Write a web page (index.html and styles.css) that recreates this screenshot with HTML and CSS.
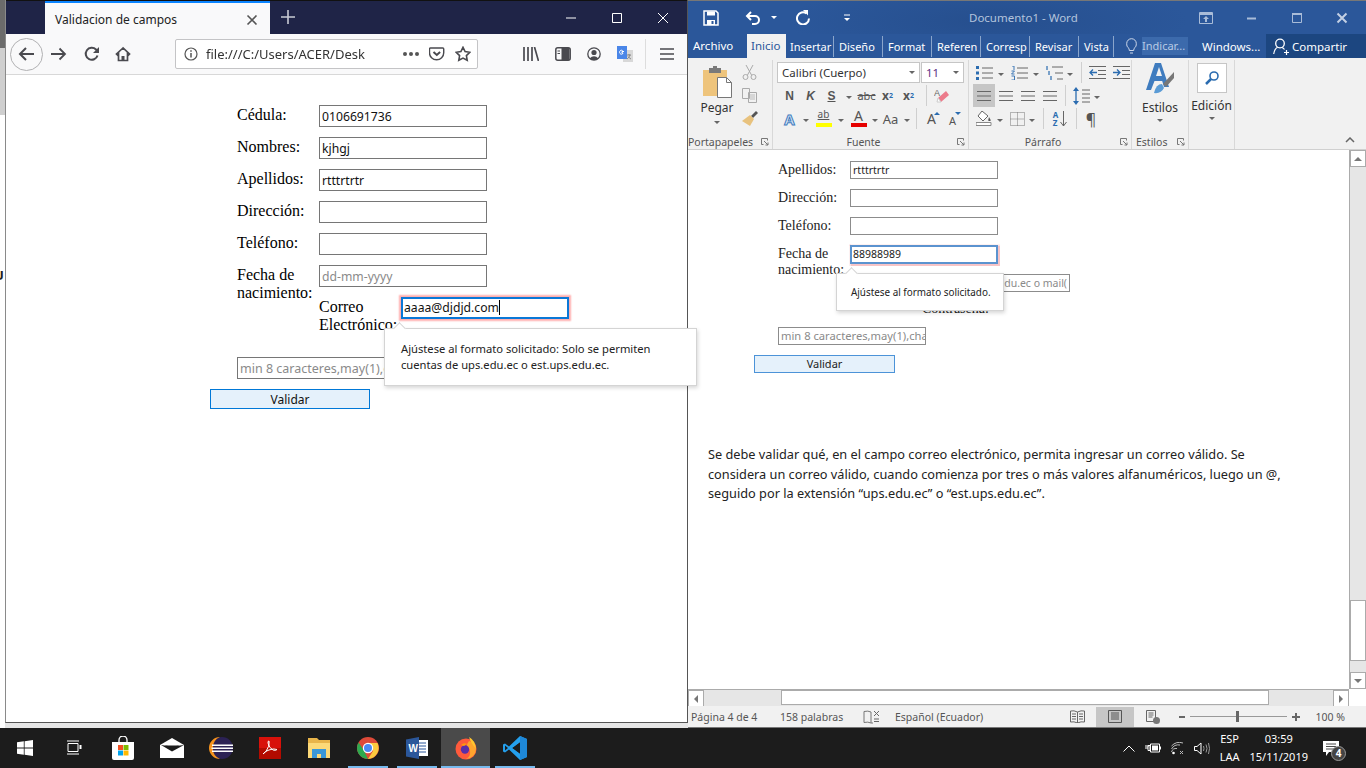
FILE: index.html
```html
<!DOCTYPE html>
<html lang="es">
<head>
  <meta charset="UTF-8" />
  <title>Validacion de campos</title>
  <link rel="stylesheet" href="styles.css">
</head>
<body>
  <svg class="sprite" width="0" height="0">
    <symbol id="lines3" viewBox="0 0 16 12"><path d="M1 1.5h14M1 6h14M1 10.5h14" stroke="#666" fill="none"/></symbol>
    <symbol id="dialog" viewBox="0 0 8 8"><path d="M.5.5h6v2M.5.5v6h2M3 3l4 4M7 4.5V7H4.5" stroke="#777" fill="none"/></symbol>
  </svg>

  <div class="desktop">
    <div class="behind"><span class="behind-letter">U</span></div>

    <!-- navegador -->
    <section class="browser">
      <div class="fx-title">
        <div class="fx-tab">
          <span class="fx-tab-name">Validacion de campos</span>
          <svg width="12" height="12" viewBox="0 0 12 12"><path d="M1.5 1.5l9 9M10.5 1.5l-9 9" stroke="#555" stroke-width="1.6"/></svg>
        </div>
        <svg class="fx-new" width="14" height="14" viewBox="0 0 14 14"><path d="M7 0v14M0 7h14" stroke="#c8cad4" stroke-width="1.6"/></svg>
        <div class="win-btns">
          <svg width="12" height="12" viewBox="0 0 12 12"><path d="M1 6h10" stroke="#fff"/></svg>
          <svg width="12" height="12" viewBox="0 0 12 12"><path d="M1.5 1.5h9v9h-9z" stroke="#fff" fill="none"/></svg>
          <svg width="12" height="12" viewBox="0 0 12 12"><path d="M1 1l10 10M11 1L1 11" stroke="#fff"/></svg>
        </div>
      </div>
      <div class="fx-bar">
        <div class="fx-back">
          <svg width="18" height="18" viewBox="0 0 18 18"><path d="M16 9H2M8 3L2 9l6 6" stroke="#4a4a4f" stroke-width="2" fill="none"/></svg>
        </div>
        <svg class="fx-fwd" width="16" height="16" viewBox="0 0 16 16"><path d="M0 8h14M8.500 2.500L14 8l-5.500 5.500" stroke="#4a4a4f" stroke-width="1.800" fill="none"/></svg>
        <svg class="fx-reload" width="16" height="16" viewBox="0 0 16 16"><path d="M13.500 9.500A6 6 0 1 1 12 3.500L14 5.500" stroke="#4a4a4f" stroke-width="2" fill="none"/><path d="M15 1v6H9z" fill="#4a4a4f"/></svg>
        <svg class="fx-home" width="16" height="16" viewBox="0 0 16 16"><path d="M8 2L1.500 8 2.500 9 3.500 8v6.500h9V8l1 1 1-1z" fill="none" stroke="#4a4a4f" stroke-width="1.700"/><path d="M6.500 10h3v4.500h-3z" fill="#4a4a4f"/></svg>
        <div class="fx-url">
          <svg width="14" height="14" viewBox="0 0 14 14"><circle cx="7" cy="7" r="6" stroke="#555" fill="none" stroke-width="1.200"/><path d="M7 6v4.500M7 3.300v1.500" stroke="#555" stroke-width="1.500"/></svg>
          <span class="fx-url-text">file:///C:/Users/ACER/Desk</span>
          <span class="fx-dots"><i></i><i></i><i></i></span>
          <svg width="16" height="15" viewBox="0 0 16 15"><path d="M1.500 1h13q1 0 1 1v4a7.500 7.500 0 0 1-15 0V2q0-1 1-1z" stroke="#4a4a4f" stroke-width="1.500" fill="none" transform="scale(.95)"/><path d="M4.500 5l3.300 3 3.300-3" stroke="#4a4a4f" stroke-width="2" fill="none"/></svg>
          <svg width="16" height="16" viewBox="0 0 16 16"><path d="M8 1.300l2.100 4.300 4.700.7-3.400 3.300.8 4.700L8 12.100l-4.200 2.200.8-4.700L1.200 6.300l4.700-.7z" stroke="#4a4a4f" stroke-width="1.600" fill="none"/></svg>
        </div>
        <div class="fx-tools">
          <svg width="16" height="14" viewBox="0 0 16 14"><path d="M1 0v14M5 0v14M9 0v14M11.500 0l4 14" stroke="#4a4a4f" stroke-width="1.700"/></svg>
          <svg width="16" height="14" viewBox="0 0 16 14"><rect x=".8" y=".8" width="14.400" height="12.400" rx="2" stroke="#4a4a4f" stroke-width="1.500" fill="none"/><path d="M6.500 1v12h8V1z" fill="#4a4a4f"/><path d="M2.500 4h2.500M2.500 6.500h2.500" stroke="#4a4a4f"/></svg>
          <svg width="14" height="14" viewBox="0 0 14 14"><circle cx="7" cy="7" r="6.200" stroke="#4a4a4f" stroke-width="1.300" fill="none"/><circle cx="7" cy="5.500" r="2.600" fill="#4a4a4f"/><path d="M2.500 11.500q4.500-4.500 9 0l-2 1.500h-5z" fill="#4a4a4f"/></svg>
          <svg width="16" height="16" viewBox="0 0 16 16"><path d="M6 4h10v12H6z" fill="#d8d8d8"/><path d="M0 0h10v13H0z" fill="#4a86e8"/><path d="M7 5.500H5v1.500h1q-.3 1.200-1.300 1.200a2 2 0 1 1 .9-3.700" stroke="#fff" fill="none"/><path d="M10 9h4M12 8v1M13 9q-1 3-3 4M11 10.500q1 1.500 3 2.500" stroke="#777" fill="none" stroke-width=".8"/></svg>
          <span class="fx-sep"></span>
          <svg width="14" height="12" viewBox="0 0 14 12"><path d="M0 1h14M0 6h14M0 11h14" stroke="#4a4a4f" stroke-width="1.700"/></svg>
        </div>
      </div>
      <div class="fx-page">
        <form class="val-form">
          <div class="val-row"><label class="val-label">Cédula:</label><input class="val-input" value="0106691736"></div>
          <div class="val-row"><label class="val-label">Nombres:</label><input class="val-input" value="kjhgj"></div>
          <div class="val-row"><label class="val-label">Apellidos:</label><input class="val-input" value="rtttrtrtr"></div>
          <div class="val-row"><label class="val-label">Dirección:</label><input class="val-input"></div>
          <div class="val-row"><label class="val-label">Teléfono:</label><input class="val-input"></div>
          <div class="val-row val-row-date"><label class="val-label">Fecha de nacimiento:</label><input class="val-input" placeholder="dd-mm-yyyy"></div>
          <div class="val-row val-row-mail">
            <label class="val-label val-label-mail">Correo Electrónico:</label>
            <div class="val-mailbox">
              <div class="val-input val-input-bad">aaaa@djdjd.com<span class="caret-bar"></span></div>
              <div class="val-tip val-tip-big">
                <span class="val-tip-arrow"></span>
                Ajústese al formato solicitado: Solo se permiten cuentas de ups.edu.ec o est.ups.edu.ec.
              </div>
            </div>
          </div>
          <input class="val-input val-pass" placeholder="min 8 caracteres,may(1),cha">
          <button type="button" class="val-btn">Validar</button>
        </form>
      </div>
    </section>

    <!-- word -->
    <section class="word">
      <div class="wd-title">
        <svg class="wd-save" width="16" height="16" viewBox="0 0 16 16"><path d="M1 1h12l2 2v12H1z" stroke="#fff" stroke-width="1.500" fill="none"/><path d="M4 1.500h8v4H4zM4 10h8v5H4z" fill="#fff"/><path d="M8.500 11h2v3h-2z" fill="#2b579a"/></svg>
        <svg class="wd-undo" width="16" height="14" viewBox="0 0 16 14"><path d="M2 5h8a4 4 0 0 1 0 8H7M6 1L2 5l4 4" stroke="#fff" stroke-width="2" fill="none"/></svg>
        <span class="arrow-down arrow-white wd-undo-arrow"></span>
        <svg class="wd-redo" width="14" height="15" viewBox="0 0 14 15"><path d="M10.500 3.500a6 6 0 1 0 2.500 5" stroke="#fff" stroke-width="2" fill="none"/><path d="M7 0h5v5.500z" fill="#fff"/></svg>
        <svg class="wd-custom" width="8" height="8" viewBox="0 0 8 8"><path d="M1 1h6" stroke="#fff"/><path d="M1 4h6L4 7z" fill="#fff"/></svg>
        <span class="wd-name">Documento1 - Word</span>
        <div class="wd-win">
          <svg width="14" height="12" viewBox="0 0 14 12"><path d="M.5 .5h13v11H.5z" stroke="#a9bcd8" fill="none"/><path d="M1 1h12v2H1zM7 4l3 3H8v3H6V7H4z" fill="#a9bcd8"/></svg>
          <svg width="12" height="12" viewBox="0 0 12 12"><path d="M1 6.500h9" stroke="#a9bcd8" stroke-width="2"/></svg>
          <svg width="12" height="12" viewBox="0 0 12 12"><path d="M1.500 1.500h9v9h-9z" stroke="#a9bcd8" fill="none"/><path d="M1 1h10v2H1z" fill="#a9bcd8"/></svg>
          <svg width="12" height="12" viewBox="0 0 12 12"><path d="M1.500 1.500l9 9M10.500 1.500l-9 9" stroke="#c3d0e4" stroke-width="2"/></svg>
        </div>
      </div>
      <nav class="wd-tabs">
        <span class="wd-tab wd-archivo">Archivo</span>
        <span class="wd-tab wd-active">Inicio</span>
        <span class="wd-tab wd-sep">Insertar</span>
        <span class="wd-tab wd-sep">Diseño</span>
        <span class="wd-tab wd-sep">Format</span>
        <span class="wd-tab wd-sep">Referen</span>
        <span class="wd-tab wd-sep">Corresp</span>
        <span class="wd-tab wd-sep">Revisar</span>
        <span class="wd-tab wd-sep wd-vista">Vista</span>
        <svg class="wd-bulb" width="11" height="16" viewBox="0 0 11 16"><path d="M3 10.500C1 9 .7 7.500.7 5.500a4.800 4.800 0 0 1 9.600 0c0 2-.3 3.500-2.300 5l-.3 2H3.300zM4 15h3" stroke="#cfd9ea" fill="none"/></svg>
        <span class="wd-tell">Indicar...</span>
        <span class="wd-windows">Windows...</span>
        <span class="wd-share">
          <svg width="16" height="17" viewBox="0 0 16 17"><circle cx="7" cy="5.500" r="4.300" stroke="#fff" stroke-width="1.300" fill="none"/><path d="M.7 16q.8-5.500 4-6.800M9 9.500q1.500.5 2.500 2M11 14.500h5M13.500 12v5" stroke="#fff" stroke-width="1.200" fill="none"/></svg>
          Compartir
        </span>
      </nav>
      <div class="ribbon">
        <div class="rb-group rb-clip">
          <div class="rb-body rb-clip-body">
            <div class="rb-paste">
              <svg width="29" height="32" viewBox="0 0 29 32"><path d="M0 4h24v26H0z" fill="#eec47c"/><path d="M6 2h12v5H6z" fill="#7a7a7a"/><path d="M10 0h4v3h-4z" fill="#7a7a7a"/><path d="M14.500 11.500h9l5 5v15h-14z" fill="#fff" stroke="#777"/><path d="M23.500 11.500v5h5" fill="none" stroke="#777"/></svg>
              <span class="rb-big-label">Pegar</span>
              <span class="arrow-down"></span>
            </div>
            <div class="rb-clip-tools">
              <svg width="15" height="15" viewBox="0 0 15 15"><path d="M4 0l5.500 10M11 0L5.500 10" stroke="#aaa" fill="none"/><circle cx="3.500" cy="12" r="2.500" stroke="#aaa" fill="none"/><circle cx="11.500" cy="12" r="2.500" stroke="#aaa" fill="none"/></svg>
              <svg width="15" height="15" viewBox="0 0 15 15"><path d="M.5.500h7v10h-7zM6.500 4.500h8v10h-8z" stroke="#aaa" fill="#f1f1f1"/><path d="M8 7h5M8 9h5M8 11h5" stroke="#bbb"/></svg>
              <svg width="16" height="15" viewBox="0 0 16 15"><path d="M9 5l5-5 2 2-5 5z" fill="#555"/><path d="M8 4l4 4-4 7-8-5z" fill="#e8c27e"/></svg>
            </div>
          </div>
          <div class="rb-caption">Portapapeles<svg class="rb-launch" width="8" height="8"><use href="#dialog"/></svg></div>
        </div>

        <div class="rb-group rb-font">
          <div class="rb-body rb-stack">
            <div class="rb-selects">
              <div class="rb-select rb-select-font"><span>Calibri (Cuerpo)</span><span class="arrow-down"></span></div>
              <div class="rb-select rb-select-size"><span>11</span><span class="arrow-down"></span></div>
            </div>
            <div class="rb-row rb-row-font">
              <span class="tool tool-b">N</span>
              <span class="tool tool-i">K</span>
              <span class="tool tool-u">S</span>
              <span class="tool-caret"><span class="arrow-down"></span></span>
              <span class="tool tool-strike">abc</span>
              <span class="tool tool-sub">x<sub>2</sub></span>
              <span class="tool tool-sub">x<sup>2</sup></span>
              <span class="rb-vsep rb-vsep-eraser"></span>
              <svg class="tool-svg" width="16" height="16" viewBox="0 0 16 16"><path d="M7 14l8-7-3-4-8 7z" fill="#ec7b8b"/><path d="M4 10l3 4H3z" fill="#fff" stroke="#ccc"/><text x="0" y="8" font-size="9" fill="#666" font-family="Liberation Sans">A</text></svg>
            </div>
            <div class="rb-row rb-row-font">
              <span class="tool tool-a-fx">A</span>
              <span class="tool-caret tool-caret-s"><span class="arrow-down"></span></span>
              <span class="tool-gap"></span>
              <span class="tool tool-color"><span class="tool-ab">ab</span><span class="bar bar-yellow"></span></span>
              <span class="tool-caret"><span class="arrow-down"></span></span>
              <span class="tool tool-color"><span class="tool-a">A</span><span class="bar bar-red"></span></span>
              <span class="tool-caret tool-caret-s"><span class="arrow-down"></span></span>
              <span class="tool tool-aa">Aa</span>
              <span class="tool-caret tool-caret-s"><span class="arrow-down"></span></span>
              <span class="rb-vsep rb-vsep-tight"></span>
              <span class="tool tool-grow">A<i class="mini-up"></i></span>
              <span class="tool tool-shrink">A<i class="mini-down"></i></span>
            </div>
          </div>
          <div class="rb-caption rb-caption-off">Fuente<svg class="rb-launch" width="8" height="8"><use href="#dialog"/></svg></div>
        </div>

        <div class="rb-group rb-para">
          <div class="rb-body rb-stack rb-para-body">
            <div class="rb-row rb-row-para">
              <svg class="ptool" width="18" height="14" viewBox="0 0 18 14"><path d="M6 2h11M6 7h11M6 12h11" stroke="#666"/><path d="M0 0h3v3H0zM0 5.500h3v3H0zM0 11h3v3H0z" fill="#2b6cb0"/></svg>
              <span class="tool-caret"><span class="arrow-down"></span></span>
              <svg class="ptool" width="18" height="14" viewBox="0 0 18 14"><path d="M6 2h11M6 7h11M6 12h11" stroke="#666"/><path d="M1 0h2v4M.500 5h3l-3 3h3M.500 10h3v4h-3" stroke="#2b6cb0" fill="none" stroke-width=".9"/></svg>
              <span class="tool-caret"><span class="arrow-down"></span></span>
              <svg class="ptool" width="17" height="14" viewBox="0 0 17 14"><path d="M6 1h11M9 7h8M11 13h6" stroke="#666"/><path d="M1 0v4M3 5v4M5 10v4" stroke="#2b6cb0" stroke-width="1.200"/></svg>
              <span class="tool-caret"><span class="arrow-down"></span></span>
              <span class="rb-vsep rb-vsep-tight"></span>
              <svg class="ptool" width="17" height="13" viewBox="0 0 17 13"><path d="M0 .5h17M9 4.500h8M9 8.500h8M0 12.500h17" stroke="#666"/><path d="M8 6.500H1M4 3.500l-3 3 3 3" stroke="#2b6cb0" stroke-width="1.300" fill="none"/></svg>
              <svg class="ptool ptool-indent" width="17" height="13" viewBox="0 0 17 13"><path d="M0 .5h17M9 4.500h8M9 8.500h8M0 12.500h17" stroke="#666"/><path d="M0 6.500h7M4 3.500l3 3-3 3" stroke="#2b6cb0" stroke-width="1.300" fill="none"/></svg>
            </div>
            <div class="rb-row rb-row-para">
              <span class="align-tool align-active"><svg width="16" height="12"><use href="#lines3"/></svg></span>
              <span class="align-tool"><svg width="16" height="12"><use href="#lines3"/></svg></span>
              <span class="align-tool"><svg width="16" height="12"><use href="#lines3"/></svg></span>
              <span class="align-tool"><svg width="16" height="12"><use href="#lines3"/></svg></span>
              <span class="rb-vsep rb-vsep-tight"></span>
              <svg class="ptool" width="17" height="18" viewBox="0 0 17 18"><path d="M3 2v14" stroke="#2b6cb0" stroke-width="1.300"/><path d="M0 4l3-4 3 4zM0 14l3 4 3-4z" fill="#2b6cb0"/><path d="M9 3h8M9 7h8M9 11h8M9 15h8" stroke="#666"/></svg>
              <span class="tool-caret"><span class="arrow-down"></span></span>
            </div>
            <div class="rb-row rb-row-para">
              <svg class="ptool" width="17" height="15" viewBox="0 0 17 15"><path d="M6 0l6 5-5 5-5-5z" fill="#fff" stroke="#666"/><path d="M13 6q2 3 1.500 4h-2q-.5-1 .5-4z" fill="#555"/><path d="M0 11.500h15v3H0z" fill="#fff" stroke="#888"/></svg>
              <span class="tool-caret"><span class="arrow-down"></span></span>
              <svg class="ptool" width="15" height="14" viewBox="0 0 15 14"><path d="M.5.500h14v13H.5zM7.500.500v13M.5 7h14" stroke="#777" stroke-dasharray="1 1" fill="none"/></svg>
              <span class="tool-caret"><span class="arrow-down"></span></span>
              <span class="rb-vsep rb-vsep-tight"></span>
              <span class="tool tool-sort"><span class="sort-az">A<br>Z</span><svg width="7" height="16" viewBox="0 0 7 16"><path d="M3.500 0v15M.5 11l3 4 3-4" stroke="#666" fill="none"/></svg></span>
              <span class="rb-vsep rb-vsep-tight"></span>
              <span class="tool tool-pilcrow">¶</span>
            </div>
          </div>
          <div class="rb-caption rb-caption-off">Párrafo<svg class="rb-launch" width="8" height="8"><use href="#dialog"/></svg></div>
        </div>

        <div class="rb-group rb-styles">
          <div class="rb-body rb-col">
            <svg width="28" height="34" viewBox="0 0 28 34"><path d="M9 0h6l8 24h-5l-1.800-6H8.500L5 27H0zM10 13h6l-3-9z" fill="#3f7cbf"/><path d="M28 9l-11 12 3 3 8-9z" fill="#777"/><path d="M16 21q-6 0-8 9 7 1 10-5z" fill="#5a9bd5"/></svg>
            <span class="rb-big-label rb-styles-label">Estilos</span>
            <span class="arrow-down"></span>
          </div>
          <div class="rb-caption rb-caption-left">Estilos<svg class="rb-launch" width="8" height="8"><use href="#dialog"/></svg></div>
        </div>

        <div class="rb-group rb-edit">
          <div class="rb-body rb-col">
            <span class="rb-edit-box">
              <svg width="14" height="14" viewBox="0 0 14 14"><circle cx="9" cy="5" r="4" stroke="#2b6cb0" stroke-width="1.600" fill="none"/><path d="M6 8l-5 5" stroke="#2b6cb0" stroke-width="2.500"/></svg>
            </span>
            <span class="rb-big-label">Edición</span>
            <span class="arrow-down"></span>
          </div>
        </div>

        <svg class="rb-collapse" width="10" height="6" viewBox="0 0 10 6"><path d="M1 5l4-4 4 4" stroke="#666" stroke-width="1.500" fill="none"/></svg>
      </div>

      <div class="wd-main">
        <div class="wd-doc">
          <div class="doc-clip">
            <div class="doc-shot">
              <div class="doc-row"><span class="doc-label">Apellidos:</span><span class="doc-input">rtttrtrtr</span></div>
              <div class="doc-row"><span class="doc-label">Dirección:</span><span class="doc-input"></span></div>
              <div class="doc-row"><span class="doc-label">Teléfono:</span><span class="doc-input"></span></div>
              <div class="doc-row doc-row-date">
                <span class="doc-label">Fecha de nacimiento:</span>
                <div class="doc-datebox">
                  <span class="doc-input doc-input-bad">88988989</span>
                  <div class="val-tip val-tip-small"><span class="val-tip-arrow"></span>Ajústese al formato solicitado.</div>
                </div>
              </div>
              <div class="doc-mail"><span class="doc-input doc-input-ph doc-input-rt">ups.edu.ec o mail(</span></div>
              <div class="doc-contra">Contraseña:</div>
              <div class="doc-input doc-input-ph doc-pass">min 8 caracteres,may(1),cha</div>
              <div class="doc-btn">Validar</div>
            </div>
            <p class="doc-para">Se debe validar qué, en el campo correo electrónico, permita ingresar un correo válido. Se considera un correo válido, cuando comienza por tres o más valores alfanuméricos, luego un @, seguido por la extensión “ups.edu.ec” o “est.ups.edu.ec”.</p>
          </div>
          <div class="wd-vscroll">
            <span class="sb-btn"><i class="tri-up"></i></span>
            <span class="sb-track"><span class="sb-thumb"></span></span>
            <span class="sb-btn"><i class="tri-down"></i></span>
          </div>
        </div>
        <div class="wd-hscroll">
          <span class="sb-btn"><i class="tri-left"></i></span>
          <span class="sb-htrack"><span class="sb-hthumb"></span></span>
          <span class="sb-btn"><i class="tri-right"></i></span>
        </div>
      </div>

      <footer class="wd-status">
        <span class="st-page">Página 4 de 4</span>
        <span class="st-words">158 palabras</span>
        <svg class="st-proof" width="17" height="14" viewBox="0 0 17 14"><path d="M8 2Q5 .5 1 1.500v11q4-1 7 .5" stroke="#777" fill="none"/><path d="M8 2v11M8 13h2" stroke="#777" fill="none"/><path d="M11 1l5 5M16 1l-5 5M11 9h5M11 11.500h5" stroke="#666" fill="none"/></svg>
        <span class="st-lang">Español (Ecuador)</span>
        <span class="st-views">
          <span class="st-view"><svg width="15" height="13" viewBox="0 0 15 13"><path d="M7.500 2Q4 .2.500 1v11q3.500-.8 7 1 3.500-1.800 7-1V1Q11 .2 7.500 2zM7.500 2v11M2 4h4M2 6.500h4M2 9h4M9 4h4M9 6.500h4M9 9h4" stroke="#666" fill="none"/></svg></span>
          <span class="st-view st-view-on"><svg width="14" height="13" viewBox="0 0 14 13"><path d="M.5.500h13v12H.5zM3 3h8M3 5h8M3 7h8M3 9h8" stroke="#555" fill="none"/></svg></span>
          <span class="st-view"><svg width="14" height="14" viewBox="0 0 14 14"><path d="M.5.500h9v11h-9zM2.500 3h5M2.500 5h5M2.500 7h4" stroke="#666" fill="none"/><circle cx="10.500" cy="10.500" r="3.500" fill="#777"/></svg></span>
        </span>
        <span class="st-zoom">
          <span class="st-minus"></span>
          <span class="st-slider"><span class="st-knob"></span></span>
          <span class="st-plus"></span>
        </span>
        <span class="st-pct">100 %</span>
      </footer>
    </section>
  </div>

  <!-- barra de tareas -->
  <footer class="taskbar">
    <span class="tb-item"><svg width="16" height="16" viewBox="0 0 16 16"><path d="M0 2.300L6.800 1.300v6.300H0zM7.600 1.200L16 0v7.600H7.600zM0 8.400h6.800v6.300L0 13.700zM7.600 8.400H16V16l-8.400-1.200z" fill="#fff"/></svg></span>
    <span class="tb-item"><svg width="16" height="16" viewBox="0 0 16 16"><path d="M2 3.500h10v8H2zM1 1h12M1 14h12" stroke="#fff" fill="none"/><path d="M14.500 5v4" stroke="#fff" stroke-width="2"/></svg></span>
    <span class="tb-item"><svg width="22" height="24" viewBox="0 0 22 24"><path d="M0 6h22v16q0 2-2 2H2q-2 0-2-2z" fill="#fff"/><path d="M7 8V4a4 4 0 0 1 8 0v4" stroke="#fff" fill="none" stroke-width="1.300"/><path d="M6 9h5v5H6z" fill="#f25022"/><path d="M11.500 9h5v5h-5z" fill="#7fba00"/><path d="M6 14.500h5v5H6z" fill="#00a4ef"/><path d="M11.500 14.500h5v5h-5z" fill="#ffb900"/></svg></span>
    <span class="tb-item"><svg width="24" height="20" viewBox="0 0 24 20"><path d="M12 0l12 7v13H0V7z" fill="#fff"/><path d="M1 7l11 6.500L24 7l-12 1.500z" fill="#1c1c1c"/><path d="M5 7.500h14L12 12z" fill="#1c1c1c"/></svg></span>
    <span class="tb-item"><svg width="24" height="24" viewBox="0 0 24 24"><circle cx="13" cy="12" r="11" fill="#2c2255"/><path d="M11 1a11 11 0 0 0 0 22A12 12 0 0 1 11 1z" fill="#f7941e"/><path d="M3 8.500h21v1.500H3zM2.500 11.500h22v1.500h-22zM3 14.500h21V16H3z" fill="#fff"/></svg></span>
    <span class="tb-item"><svg width="22" height="22" viewBox="0 0 22 22"><path d="M0 0h22v22H0z" fill="#b30b00"/><path d="M0 0h22v11H0z" fill="#d8110a"/><path d="M4 17q3-1 5.500-7.500Q10.500 6 10 4q-1-.5-1 2 1 5 5 7 3 1 4-.5-3-1.500-8 .5-4 1-6 4z" stroke="#fff" fill="none"/></svg></span>
    <span class="tb-item"><svg width="22" height="22" viewBox="0 0 22 22"><path d="M0 1h9l2 2h11v18H0z" fill="#e8b44a"/><path d="M0 6h22v15H0z" fill="#fcd978"/><path d="M4 12h14v9h-5v-4H9v4H4z" fill="#3a97d8"/></svg></span>
    <span class="tb-item tb-running"><svg width="22" height="22" viewBox="0 0 22 22"><circle cx="11" cy="11" r="11" fill="#de4a39"/><path d="M11 22a11 11 0 0 1-9.500-16.500L7 13.500z" fill="#2da94f"/><path d="M11 6h9.500A11 11 0 0 1 11 22l5-8z" fill="#fcca3e"/><circle cx="11" cy="11" r="5.200" fill="#fff"/><circle cx="11" cy="11" r="4" fill="#4a8af4"/></svg></span>
    <span class="tb-item tb-running"><svg width="22" height="22" viewBox="0 0 22 22"><path d="M8 3h14v16H8z" fill="#fff"/><path d="M11 6h9M11 9h9M11 12h9M11 15h9" stroke="#2b579a"/><path d="M0 2.500L13 0v22L0 19.500z" fill="#2b579a"/><text x="2.500" y="15" font-size="10" font-weight="700" fill="#fff" font-family="Liberation Sans">W</text></svg></span>
    <span class="tb-item tb-active"><svg width="24" height="24" viewBox="0 0 24 24"><circle cx="12" cy="13" r="10.500" fill="#ff5a3c"/><path d="M22 13a10 10 0 0 1-10 10q5-3 4-8-1-3-3-4 0-4 2-6 7 2 7 8z" fill="#ffa52e"/><path d="M15 1q6 3 7 12l-3-4q-3-4-4-8z" fill="#ffc72e"/><circle cx="11" cy="13.500" r="4.200" fill="#5b2ea8"/><path d="M7 9q3-3 6-1l-3 2z" fill="#ff980e"/></svg></span>
    <span class="tb-item tb-running"><svg width="24" height="24" viewBox="0 0 24 24"><path d="M17 0l7 3v18l-7 3L6 13.500 2 16.500 0 15.500v-7l2-1 4 3z" fill="#24a0ed"/><path d="M17 6.500L9.500 12l7.500 5.500z" fill="#1c1c1c"/><path d="M2 9.500L5 12l-3 2.500z" fill="#1c1c1c"/><path d="M17 0l7 3v18l-7 3z" fill="#1e88d8"/><path d="M17 6.500L9.500 12l7.500 5.500z" fill="#1c1c1c"/></svg></span>

    <div class="tb-tray">
      <svg width="12" height="7" viewBox="0 0 12 7"><path d="M.5 6.500L6 1l5.500 5.500" stroke="#fff" fill="none"/></svg>
      <svg width="16" height="10" viewBox="0 0 16 10"><path d="M5.500 1h9v8h-9z" stroke="#fff" fill="none"/><path d="M7 2.500h6v5H7zM15 3.500h1v3h-1z" fill="#fff"/><path d="M0 5h3M3 2.500h2v5H3zM1 2v2M3 2v2" stroke="#fff" fill="none"/></svg>
      <svg width="13" height="13" viewBox="0 0 13 13"><path d="M.5 7A8 8 0 0 1 9 3M.5 10A5 5 0 0 1 6 6.500M.5 4A11 11 0 0 1 12 1" stroke="#bbb" fill="none"/><circle cx="2.500" cy="11" r="1.300" fill="#fff"/><path d="M9 9l3 3M12 9l-3 3" stroke="#bbb"/></svg>
      <svg width="16" height="13" viewBox="0 0 16 13"><path d="M.5 4.500h2.500L7 1v11L3 8.500H.5z" stroke="#fff" fill="none"/><path d="M9.500 4q1 2.500 0 5M12 2.500q2 4 0 8M14.500 1q2 5.500 0 11" stroke="#999" fill="none"/></svg>
      <div class="tb-lang"><span>ESP</span><span>LAA</span></div>
      <div class="tb-clock"><span>03:59</span><span>15/11/2019</span></div>
      <span class="tb-notif">
        <svg width="16" height="15" viewBox="0 0 16 15"><path d="M0 0h16v11H6l-3 4v-4H0z" fill="#fff"/><path d="M3 3h10M3 5.500h10M3 8h10" stroke="#1c1c1c" stroke-width=".8"/></svg>
        <span class="tb-badge">4</span>
      </span>
    </div>
  </footer>
</body>
</html>
```

FILE: styles.css
```css
* {
  box-sizing: border-box;
}

html, body {
  margin: 0;
  padding: 0;
  width: 1366px;
  height: 768px;
  overflow: hidden;
  background: #1c1c1c;
  font-family: "Noto Sans", "Open Sans", sans-serif;
}

.sprite {
  position: absolute;
}

.desktop {
  display: flex;
  height: 728px;
  background: #e6e6e6;
}

.behind {
  width: 5px;
  height: 728px;
  flex: none;
  background: linear-gradient(#cfcfcf 0 67px, #fff 67px);
  border-top: 48px solid #6b6b6b;
  overflow: hidden;
}

.behind-letter {
  display: block;
  margin: 218px 0 0 -6px;
  font: 700 13px "Noto Sans", sans-serif;
  color: #222;
}

/* ======== FIREFOX ========= */
.browser {
  width: 683px;
  height: 723px;
  flex: none;
  display: flex;
  flex-direction: column;
  background: #fff;
  border-left: 1px solid #8a8a8a;
  border-right: 1px solid #555;
  border-bottom: 1px solid #555;
}

.fx-title {
  height: 34px;
  display: flex;
  align-items: flex-end;
  background: #1f2447;
  border-top: 1px solid #111;
  padding-left: 39px;
}

.fx-tab {
  width: 225px;
  height: 33px;
  display: flex;
  align-items: center;
  justify-content: space-between;
  padding: 2px 12px 0 10px;
  background: #f9f9fa;
  border-top: 2px solid #0a84ff;
}

.fx-tab-name {
  font-size: 12px;
  color: #222;
}

.fx-new {
  margin: 0 0 10px 11px;
}

.win-btns {
  margin-left: auto;
  display: flex;
  gap: 34px;
  padding: 0 18px 10px 0;
}

.fx-bar {
  height: 41px;
  display: flex;
  align-items: center;
  background: #f9f9fa;
  border-bottom: 1px solid #d8d8d8;
  padding-left: 4px;
}

.fx-back {
  width: 33px;
  height: 33px;
  border: 1px solid #b1b1b3;
  border-radius: 50%;
  display: flex;
  align-items: center;
  justify-content: center;
}

.fx-fwd {
  margin-left: 8px;
}

.fx-reload {
  margin-left: 17px;
}

.fx-home {
  margin-left: 15px;
}

.fx-url {
  width: 303px;
  height: 30px;
  margin-left: 44px;
  display: flex;
  align-items: center;
  gap: 10px;
  padding: 0 6px 0 8px;
  background: #fff;
  border: 1px solid #c4c4c6;
  border-radius: 2px;
}

.fx-url-text {
  font-size: 13px;
  color: #333;
  margin-right: auto;
  margin-left: -2px;
  white-space: nowrap;
  width: 172px;
  overflow: hidden;
  -webkit-mask-image: linear-gradient(to right, #000 92%, transparent);
}

.fx-dots {
  display: flex;
  gap: 2px;
}

.fx-dots i {
  width: 4px;
  height: 4px;
  border-radius: 50%;
  background: #555;
}

.fx-tools {
  display: flex;
  align-items: center;
  margin-left: 45px;
  gap: 16px;
}

.fx-sep {
  width: 1px;
  height: 30px;
  background: #ddd;
  margin: 0 -2px 0 -4px;
}

.fx-page {
  flex: 1;
  position: relative;
  font-family: "Noto Sans", sans-serif;
}

.val-form {
  padding: 30px 0 0 231px;
}

.val-row {
  display: flex;
  height: 22px;
  margin-bottom: 10px;
}

.val-label {
  width: 82px;
  flex: none;
  font: 16px/18px "Liberation Serif", serif;
  color: #000;
  padding-top: 1px;
}

.val-input {
  width: 168px;
  height: 22px;
  padding: 0 2px;
  border: 1px solid #767676;
  background: #fff;
  font: 12.200px/20px "Noto Sans", sans-serif;
  color: #111;
  outline: none;
}

.val-input::placeholder {
  color: #8a8a8a;
}

.val-row-mail {
  margin: 0;
  padding-left: 82px;
  height: 60px;
}

.val-row-date {
  height: 31px;
  margin-bottom: 1px;
}

.val-label-mail {
  padding-top: 1px;
}

.val-mailbox {
  position: relative;
}

.val-input-bad {
  padding: 0 1px;
  border: 2px solid #0a78d7;
  line-height: 18px;
  box-shadow: 0 0 1.500px 2px #ffb0b0;
  white-space: nowrap;
  color: #111;
}

.caret-bar {
  display: inline-block;
  width: 1px;
  height: 15px;
  background: #000;
  vertical-align: -3px;
}

.val-tip {
  position: absolute;
  background: #fff;
  border: 1px solid #d4d4d4;
  box-shadow: 1px 2px 4px rgba(0, 0, 0, 0.16);
  font-size: 11.200px;
  line-height: 16px;
  color: #222;
  z-index: 3;
}

.val-tip-arrow {
  position: absolute;
  top: -5px;
  left: 10px;
  width: 9px;
  height: 9px;
  background: #fff;
  border-top: 1px solid #d4d4d4;
  border-left: 1px solid #d4d4d4;
  transform: rotate(45deg);
}

.val-tip-big {
  top: 31px;
  left: -17px;
  width: 313px;
  height: 58px;
  padding: 12px 16px;
}

.val-pass {
  display: block;
  margin-top: 0;
  font-size: 12.500px;
  overflow: hidden;
}

.val-btn {
  display: block;
  width: 160px;
  height: 20px;
  margin: 10px 0 0 -27px;
  padding: 1px 0 0;
  background: #e5f1fb;
  border: 1px solid #0078d7;
  font: 12px "Noto Sans", sans-serif;
  color: #111;
}

/* ======== WORD ========= */
.word {
  width: 678px;
  height: 728px;
  flex: none;
  display: flex;
  flex-direction: column;
  background: #f1f1f1;
  border-top: 1px solid #777;
  border-bottom: 1px solid #777;
}

.wd-title {
  height: 33px;
  flex: none;
  display: flex;
  align-items: center;
  background: radial-gradient(ellipse 200px 40px at 300px 20px, #264f8e, #2b579a);
  padding-left: 15px;
}

.wd-undo {
  margin-left: 26px;
}

.wd-undo-arrow {
  margin-left: 10px;
}

.wd-redo {
  margin-left: 19px;
}

.wd-custom {
  margin-left: 33px;
}

.wd-name {
  margin-left: 118px;
  font-size: 11.500px;
  color: #b3c4dd;
}

.wd-win {
  margin-left: auto;
  display: flex;
  align-items: center;
  gap: 33px;
  padding-right: 18px;
}

.wd-tabs {
  height: 24px;
  flex: none;
  display: flex;
  align-items: center;
  background: #2b579a;
  color: #fff;
  font-size: 11px;
}

.wd-tab {
  height: 24px;
  display: flex;
  align-items: center;
  flex: none;
  padding-bottom: 2px;
}

.wd-archivo {
  width: 59px;
  padding-left: 5px;
  font-size: 11.500px;
}

.wd-active {
  width: 39px;
  padding-left: 4px;
  background: #f1f1f1;
  color: #2b579a;
  font-size: 11.500px;
  margin-right: 4px;
}

.wd-sep {
  width: 44px;
  height: 21px;
  margin-right: 5px;
  padding-bottom: 0;
  border-right: 1px solid #8aa5cb;
}

.wd-vista {
  width: 30px;
  margin-right: 0;
}

.wd-bulb {
  margin-left: 12px;
  flex: none;
}

.wd-tell {
  margin-left: 5px;
  width: 46px;
  flex: none;
  background: #3c6aac;
  color: #b9cbe4;
  line-height: 18px;
}

.wd-windows {
  margin-left: 14px;
  font-size: 11.500px;
  flex: none;
}

.wd-share {
  margin-left: auto;
  width: 100px;
  height: 24px;
  flex: none;
  display: flex;
  align-items: center;
  gap: 3px;
  padding-left: 7px;
  background: #1c4680;
  font-size: 11.500px;
}

.ribbon {
  height: 92px;
  flex: none;
  display: flex;
  background: #f1f1f1;
  border-bottom: 1px solid #d0d0d0;
  position: relative;
}

.rb-group {
  height: 89px;
  border-right: 1px solid #d8d8d8;
  display: flex;
  flex-direction: column;
  flex: none;
  margin-top: 2px;
  padding-bottom: 0;
}

.rb-body {
  flex: 1;
  min-height: 0;
}

.rb-caption {
  height: 15px;
  display: flex;
  align-items: center;
  justify-content: center;
  position: relative;
  font-size: 10.500px;
  color: #555;
}

.rb-caption-off {
  padding-right: 14px;
}

.rb-caption-left {
  justify-content: flex-start;
  padding-left: 4px;
}

.rb-launch {
  position: absolute;
  right: 3px;
  top: 4px;
}

.rb-clip {
  width: 85px;
}

.rb-clip .rb-caption {
  justify-content: flex-start;
}

.rb-clip-body {
  display: flex;
  padding: 4px 0 0 10px;
}

.rb-paste {
  width: 38px;
  display: flex;
  flex-direction: column;
  align-items: center;
  gap: 2px;
  padding-top: 2px;
}

.rb-big-label {
  font-size: 12px;
  line-height: 16px;
  color: #333;
}

.rb-clip-tools {
  display: flex;
  flex-direction: column;
  gap: 8px;
  padding: 1px 0 0 6px;
}

.arrow-down {
  display: inline-block;
  width: 0;
  height: 0;
  border-left: 3px solid transparent;
  border-right: 3px solid transparent;
  border-top: 3px solid #666;
  margin-top: 3px;
}

.arrow-white {
  border-top-color: #fff;
  margin-top: 0;
}

.rb-font {
  width: 196px;
}

.rb-stack {
  padding: 2px 0 0 4px;
  display: flex;
  flex-direction: column;
}

.rb-selects {
  display: flex;
  gap: 1px;
  margin-bottom: 1px;
}

.rb-select {
  height: 21px;
  display: flex;
  align-items: center;
  justify-content: space-between;
  padding: 0 4px;
  background: #fff;
  border: 1px solid #c6c6c6;
  font-size: 11.500px;
  color: #333;
}

.rb-select .arrow-down {
  margin: 0 0 0 2px;
}

.rb-select-font {
  width: 143px;
}

.rb-select-size {
  width: 43px;
  color: #5c2d83;
}

.rb-row {
  height: 23px;
  flex: none;
  display: flex;
  align-items: center;
}

.rb-row-font {
  padding-left: 2px;
}

.tool {
  width: 21px;
  height: 22px;
  display: flex;
  align-items: center;
  justify-content: center;
  position: relative;
  font-size: 12px;
  color: #555;
  flex: none;
}

.tool-caret {
  width: 14px;
  display: flex;
  justify-content: center;
  flex: none;
}

.tool-caret-s {
  width: 11px;
}

.tool-gap {
  width: 2px;
}

.tool-b {
  font: 700 12px "Liberation Sans", sans-serif;
}

.tool-i {
  font: italic 700 12px "Liberation Sans", sans-serif;
}

.tool-u {
  font: 700 12px "Liberation Sans", sans-serif;
  text-decoration: underline;
}

.tool-strike {
  font-size: 11px;
  text-decoration: line-through;
}

.tool-sub {
  font-weight: 700;
  font-size: 12px;
}

.tool-sub sub, .tool-sub sup {
  font-size: 7px;
  color: #2b6cb0;
}

.rb-vsep {
  width: 1px;
  height: 21px;
  background: #cfcfcf;
  margin: 0 7px;
  flex: none;
}

.rb-vsep-tight {
  margin: 0 4px;
}

.rb-vsep-eraser {
  margin-right: 6px;
}

.tool-svg {
  margin-left: 1px;
}

.tool-a-fx {
  font-size: 15px;
  font-weight: 700;
  color: #dfeaf6;
  -webkit-text-stroke: 1px #3f7cbf;
}

.tool-color {
  flex-direction: column;
  justify-content: flex-start;
}

.tool-ab {
  font-size: 10px;
  line-height: 12px;
  height: 13px;
  text-decoration: underline;
}

.tool-a {
  font-size: 14px;
  line-height: 15px;
  height: 15px;
}

.bar {
  width: 16px;
  height: 4px;
}

.bar-yellow {
  background: #ffff00;
  margin-top: 2px;
}

.bar-red {
  background: #e60000;
}

.tool-aa {
  font-size: 13px;
}

.tool-grow {
  font-size: 14px;
}

.tool-shrink {
  font-size: 11px;
  padding-top: 3px;
}

.mini-up, .mini-down {
  position: absolute;
  right: 2px;
  top: 4px;
  border-left: 3px solid transparent;
  border-right: 3px solid transparent;
}

.mini-up {
  border-bottom: 3px solid #2b6cb0;
}

.mini-down {
  border-top: 3px solid #2b6cb0;
}

.rb-para {
  width: 163px;
}

.rb-para-body {
  padding: 1px 0 0 4px;
}

.rb-row-para {
  height: 23px;
}

.ptool {
  margin: 0 0 0 3px;
  flex: none;
}

.ptool-indent {
  margin-left: 7px;
}

.align-tool {
  width: 22px;
  height: 23px;
  display: flex;
  align-items: center;
  justify-content: center;
  flex: none;
}

.align-active {
  background: #c6c6c6;
}

.tool-sort {
  gap: 2px;
  width: 24px;
}

.sort-az {
  font-size: 8px;
  line-height: 8px;
  font-weight: 700;
  color: #2b6cb0;
}

.tool-pilcrow {
  font-size: 16px;
  width: 18px;
  margin-left: 1px;
}

.rb-styles {
  width: 57px;
}

.rb-edit {
  width: 46px;
  padding-bottom: 15px;
}

.rb-col {
  display: flex;
  flex-direction: column;
  align-items: center;
  padding-top: 3px;
}

.rb-styles-label {
  margin-top: 3px;
}

.rb-edit-box {
  width: 30px;
  height: 30px;
  display: flex;
  align-items: center;
  justify-content: center;
  background: #fff;
  border: 1px solid #c6c6c6;
  margin-bottom: 5px;
}

.rb-collapse {
  position: absolute;
  right: 11px;
  bottom: 6px;
}

.wd-main {
  flex: 1;
  min-height: 0;
  display: flex;
  flex-direction: column;
  background: #fff;
}

.wd-doc {
  flex: 1;
  min-height: 0;
  display: flex;
}

.doc-clip {
  flex: 1;
  padding-left: 20px;
  overflow: hidden;
}

.doc-shot {
  position: relative;
  padding: 11px 0 0 70px;
  height: 238px;
  font-size: 11px;
}

.doc-row {
  display: flex;
  height: 18px;
  margin-bottom: 10px;
}

.doc-label {
  width: 72px;
  flex: none;
  padding-top: 1px;
  font: 14px/16px "Liberation Serif", serif;
  color: #222;
}

.doc-input {
  display: block;
  width: 148px;
  height: 18px;
  padding: 0 2px;
  border: 1px solid #8c8c8c;
  background: #fff;
  font: 10.500px/16px "Noto Sans", sans-serif;
  color: #222;
  white-space: nowrap;
  overflow: hidden;
}

.doc-input-bad {
  height: 19px;
  padding: 0 1px;
  border: 2px solid #5b93cf;
  line-height: 15px;
  box-shadow: 0 0 1px 1.500px #f7c4c6;
}

.doc-input-ph {
  color: #8a8a8a;
}

.doc-row-date {
  height: 19px;
  margin-bottom: 10px;
}

.doc-datebox {
  position: relative;
}

.val-tip-small {
  top: 28px;
  left: -14px;
  width: 168px;
  height: 38px;
  padding: 10px 0 0 14px;
  font-size: 9.900px;
  white-space: nowrap;
}

.doc-mail {
  padding-left: 72px;
}

.doc-input-rt {
  width: 220px;
  text-align: right;
}

.doc-contra {
  margin: 9px 0 10px 144px;
  font: 14px/16px "Liberation Serif", serif;
  color: #222;
}

.doc-pass {
  margin: 0;
  font-size: 11.200px;
}

.doc-btn {
  width: 141px;
  height: 18px;
  margin: 10px 0 0 -24px;
  background: #e5f1fb;
  border: 1px solid #4c93d8;
  font-size: 11px;
  line-height: 16px;
  text-align: center;
  color: #222;
}

.doc-para {
  width: 590px;
  margin: 57px 0 0 0;
  font-size: 12.740px;
  line-height: 19.500px;
  color: #222;
}

.wd-vscroll {
  width: 17px;
  flex: none;
  display: flex;
  flex-direction: column;
  background: #e6e6e6;
  border-left: 1px solid #ababab;
}

.sb-btn {
  width: 16px;
  height: 17px;
  display: flex;
  align-items: center;
  justify-content: center;
  background: #fff;
  border: 1px solid #ababab;
  flex: none;
}

.sb-track {
  flex: 1;
  display: flex;
  align-items: flex-end;
  padding-bottom: 11px;
}

.sb-thumb {
  width: 16px;
  height: 61px;
  background: #fff;
  border: 1px solid #ababab;
}

.tri-up, .tri-down, .tri-left, .tri-right {
  width: 0;
  height: 0;
  border: 4px solid transparent;
}

.tri-up {
  border-bottom-color: #777;
  margin-top: -4px;
}

.tri-down {
  border-top-color: #777;
  margin-top: 4px;
}

.tri-left {
  border-right-color: #777;
  margin-left: -4px;
}

.tri-right {
  border-left-color: #777;
  margin-left: 4px;
}

.wd-hscroll {
  height: 17px;
  display: flex;
  flex: none;
  margin-right: 17px;
  background: #e6e6e6;
  border-top: 1px solid #ababab;
}

.sb-htrack {
  flex: 1;
  padding-left: 77px;
}

.sb-hthumb {
  display: block;
  width: 488px;
  height: 15px;
  background: #fff;
  border: 1px solid #ababab;
}

.wd-status {
  height: 21px;
  display: flex;
  align-items: center;
  background: #f1f1f1;
  font-size: 10.500px;
  color: #555;
  padding-left: 3px;
  flex: none;
}

.st-page {
  width: 89px;
}

.st-words {
  width: 83px;
}

.st-lang {
  margin-left: 15px;
}

.st-views {
  margin-left: 75px;
  display: flex;
  height: 20px;
}

.st-view {
  width: 38px;
  display: flex;
  align-items: center;
  justify-content: center;
}

.st-view-on {
  background: #c6c6c6;
}

.st-zoom {
  display: flex;
  align-items: center;
  margin-left: 7px;
  gap: 5px;
}

.st-minus {
  width: 6px;
  height: 2px;
  background: #666;
}

.st-slider {
  width: 97px;
  height: 1px;
  background: #999;
  position: relative;
}

.st-knob {
  position: absolute;
  left: 46px;
  top: -5px;
  width: 3px;
  height: 11px;
  background: #666;
}

.st-plus {
  width: 8px;
  height: 8px;
  background: linear-gradient(#666, #666) center / 8px 2px no-repeat, linear-gradient(#666, #666) center / 2px 8px no-repeat;
}

.st-pct {
  margin-left: auto;
  padding-right: 21px;
}

/* ======== TASKBAR ========= */
.taskbar {
  height: 40px;
  display: flex;
  background: #1c1c1c;
  color: #fff;
}

.tb-item {
  width: 49px;
  height: 40px;
  display: flex;
  align-items: center;
  justify-content: center;
  flex: none;
}

.tb-running {
  background: linear-gradient(#76b9ed, #76b9ed) center bottom / 40px 2px no-repeat;
}

.tb-active {
  background: linear-gradient(#76b9ed, #76b9ed) center bottom / 49px 2px no-repeat, #4a4a4a;
}

.tb-tray {
  margin-left: auto;
  display: flex;
  align-items: center;
  gap: 10px;
  padding-right: 27px;
  font-size: 11px;
}

.tb-lang, .tb-clock {
  display: flex;
  flex-direction: column;
  align-items: center;
  line-height: 18px;
}

.tb-clock {
  margin-right: 5px;
}

.tb-notif {
  position: relative;
  display: flex;
}

.tb-badge {
  position: absolute;
  left: 8px;
  top: 5px;
  width: 15px;
  height: 15px;
  border-radius: 50%;
  background: #444;
  border: 1px solid #999;
  font-size: 10px;
  line-height: 13px;
  text-align: center;
  font-weight: 700;
}
```
